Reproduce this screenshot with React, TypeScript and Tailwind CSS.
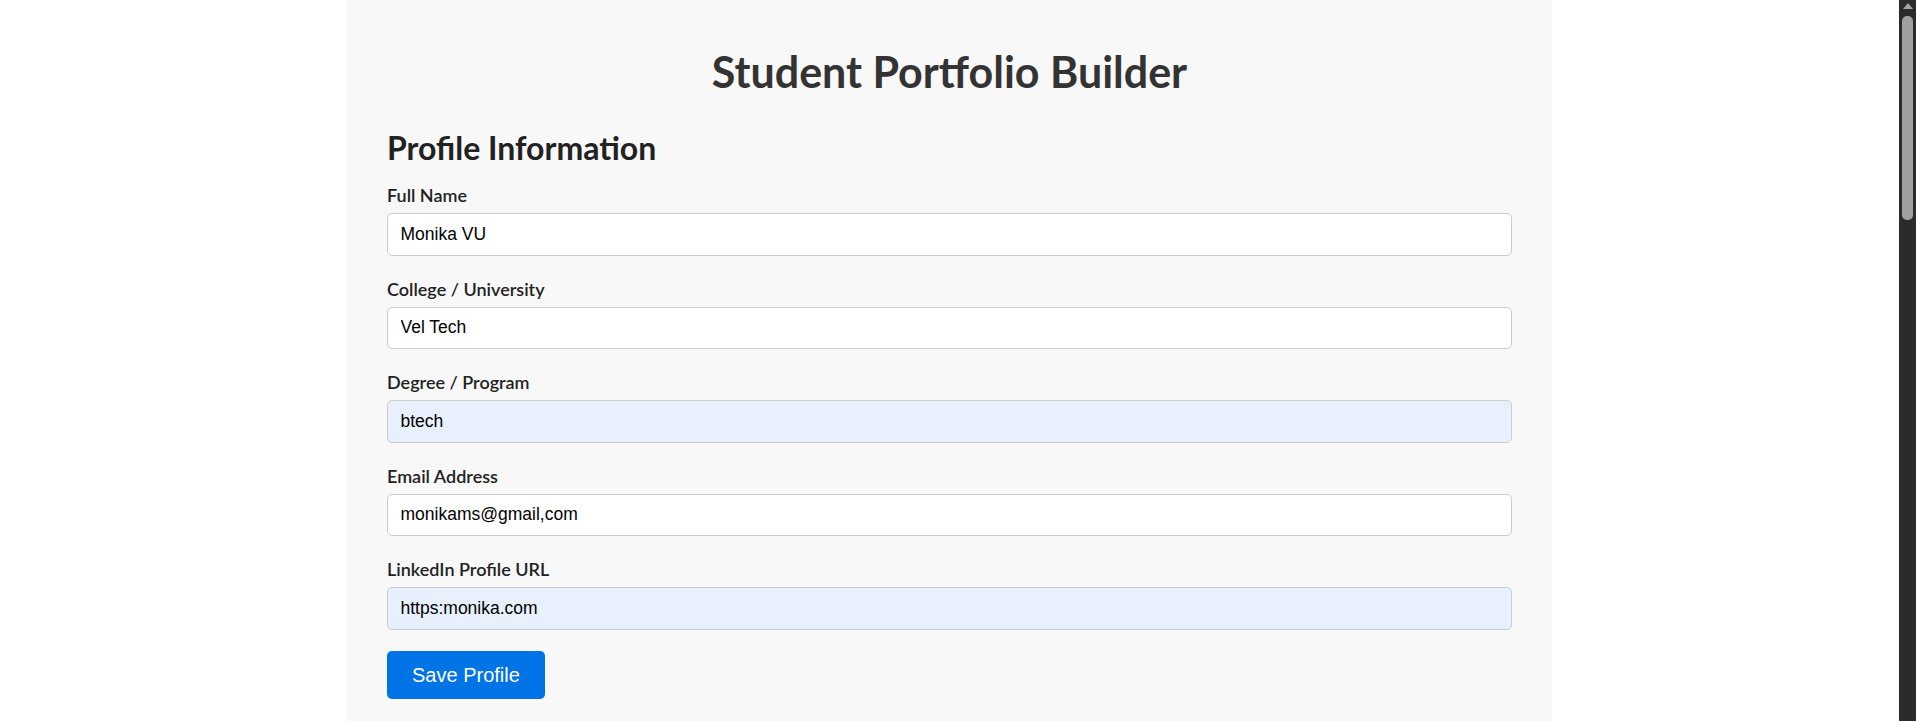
const fields = [
  { label: "Full Name", value: "Monika VU", filled: false },
  { label: "College / University", value: "Vel Tech", filled: false },
  { label: "Degree / Program", value: "btech", filled: true },
  { label: "Email Address", value: "monikams@gmail,com", filled: false },
  { label: "LinkedIn Profile URL", value: "https:monika.com", filled: true },
];

function Scrollbar() {
  return (
    <div className="w-[17px] shrink-0 bg-[#2b2b2b] flex flex-col items-center">
      <div className="mt-[3px] w-0 h-0 border-l-[5px] border-r-[5px] border-b-[6px] border-l-transparent border-r-transparent border-b-[#a3a3a3]" />
      <div className="mt-[7px] w-[11px] h-[204px] rounded-[5px] bg-[#a0a0a0]" />
    </div>
  );
}

export default function App() {
  return (
    <div className="flex h-[721px] overflow-hidden bg-white">
      <div className="flex-1 flex justify-center">
        <div
          className="w-[1205px] bg-[#f8f8f8] px-10 pt-[46px]"
          style={{ fontFamily: 'Lato, "Open Sans", sans-serif' }}
        >
          <h1 className="text-center text-[43px] leading-[52px] font-bold text-[#333]">
            Student Portfolio Builder
          </h1>

          <h2 className="mt-[30px] mb-[15px] text-[32px] leading-[40px] font-bold text-[#222]">
            Profile Information
          </h2>

          <form onSubmit={(e) => e.preventDefault()}>
            {fields.map((f) => (
              <div key={f.label} className="mb-[21px]">
                <label className="block mb-[6px] text-[18px] leading-[24px] font-semibold text-[#222]">
                  {f.label}
                </label>
                <input
                  type="text"
                  defaultValue={f.value}
                  className={`block w-full h-[42.5px] px-[12.5px] rounded-[5px] border border-[#cccccc] text-[17.5px] text-black outline-none ${
                    f.filled ? "bg-[#e8f0fe]" : "bg-white"
                  }`}
                  style={{ fontFamily: '"Liberation Sans", Arial, sans-serif' }}
                />
              </div>
            ))}

            <button
              type="submit"
              className="h-[48px] px-[25px] rounded-[5px] bg-[#0073e6] text-white text-[20px]"
              style={{ fontFamily: '"Liberation Sans", Arial, sans-serif' }}
            >
              Save Profile
            </button>
          </form>
        </div>
      </div>
      <Scrollbar />
    </div>
  );
}
